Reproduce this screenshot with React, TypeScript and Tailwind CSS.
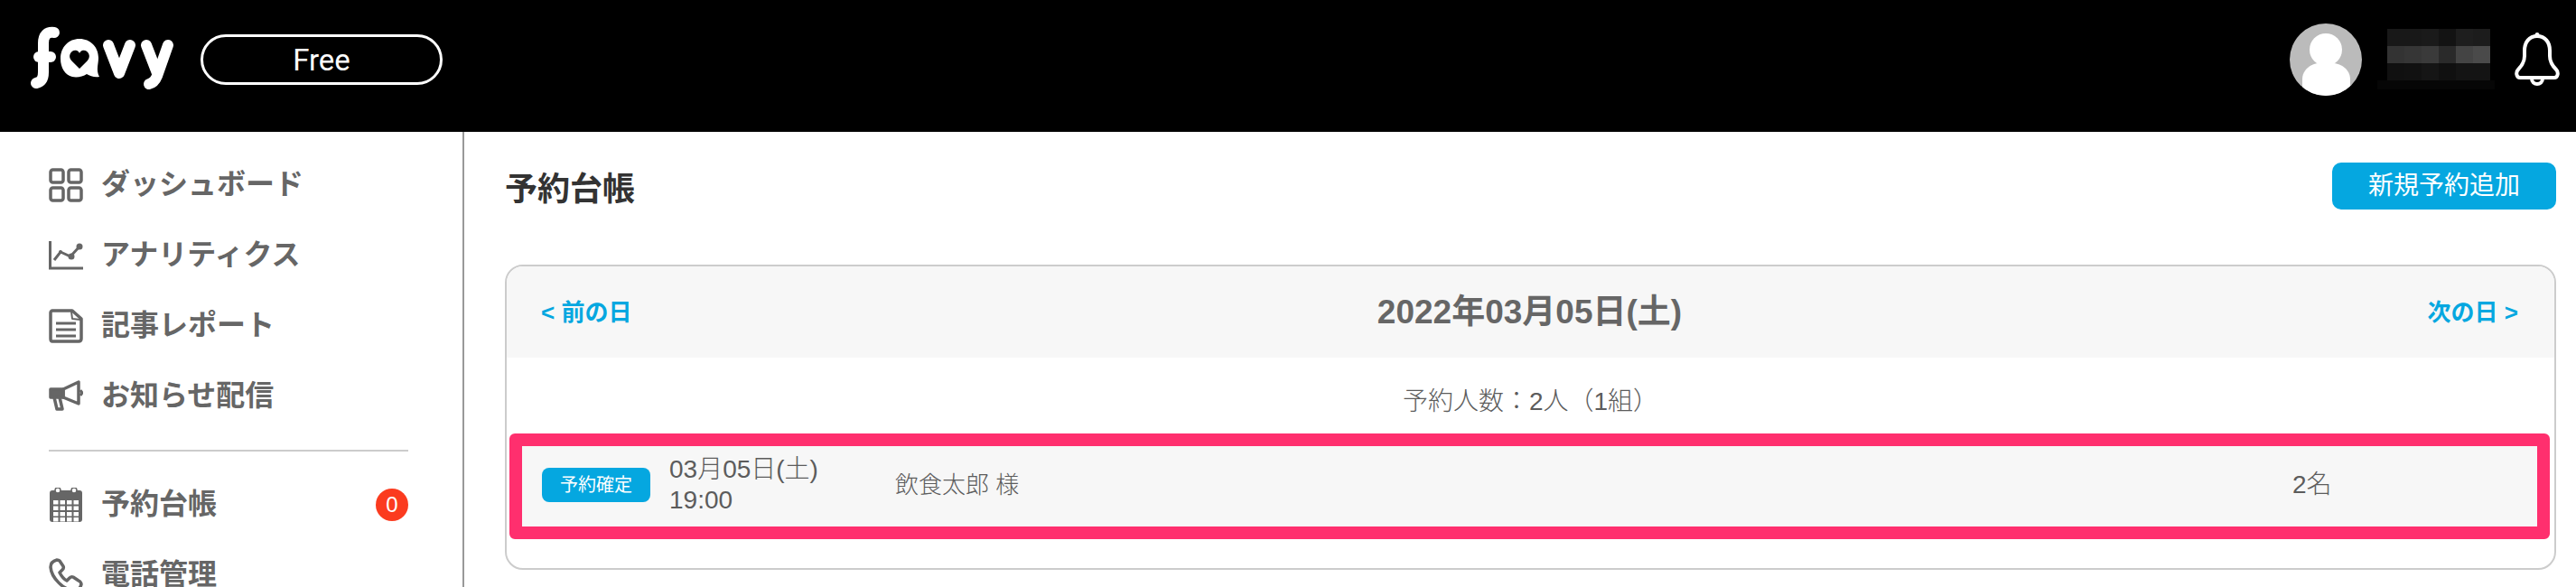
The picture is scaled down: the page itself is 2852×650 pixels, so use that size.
import React from 'react';

function FavyLogo() {
    return (
        <svg viewBox="30 28 170 80" className="w-[170px] h-[80px]" fill="none" stroke="#fff" strokeWidth="12" strokeLinecap="round" strokeLinejoin="round">
            {/* f */}
            <path d="M60 38 C52 37 48 41 48 50 L48 82 C48 90 45 93 40 94" />
            <path d="M43 65 L56 65" />
            {/* a with heart */}
            <path d="M88 45 C100 45 109 54 109 66 C109 74 106 79 110 87 C104 88 100 86 96 84 C92 87 85 88 80 87 C72 85 67 77 67 67 C67 54 76 45 88 45 Z" fill="#fff" stroke="none" />
            <path d="M88 78 L79 69 C74 63 80 56 85 58 C86.500 58.600 87.500 59.500 88 61 C88.500 59.500 89.500 58.600 91 58 C96 56 102 63 97 69 Z" fill="#000" stroke="none" />
            {/* v */}
            <path d="M120 52 L132 83 L144 52" />
            {/* y */}
            <path d="M162 52 L174 83" />
            <path d="M186 52 L174 86 C172 91 169 94 165 95" />
        </svg>
    );
}

function Avatar() {
    return (
        <svg viewBox="0 0 80 80" className="w-[80px] h-[80px] shrink-0">
            <defs>
                <clipPath id="avatarClip">
                    <circle cx="40" cy="40" r="40" />
                </clipPath>
            </defs>
            <circle cx="40" cy="40" r="40" fill="#bbbbbb" />
            <g clipPath="url(#avatarClip)" fill="#fff">
                <circle cx="40" cy="29" r="18" />
                <path d="M14 80 L14 62 C14 51 24 44 33 44 L47 44 C57 44 67 51 67 62 L67 80 Z" />
            </g>
        </svg>
    );
}

const pixelCells = [
    'bg-[#181818]', 'bg-[#181818]', 'bg-[#1a1a1a]', 'bg-[#131313]', 'bg-[#1e1e1e]', 'bg-[#1c1c1c]',
    'bg-[#333333]', 'bg-[#363636]', 'bg-[#3a3a3a]', 'bg-[#2a2a2a]', 'bg-[#444444]', 'bg-[#4a4a4a]',
    'bg-[#101010]', 'bg-[#111111]', 'bg-[#151515]', 'bg-[#101010]', 'bg-[#141414]', 'bg-[#141414]',
];

function PixelatedName() {
    return (
        <div className="relative w-[114px] h-[57px] grid grid-cols-6 grid-rows-3 ml-[28px] -mt-[11px]">
            {pixelCells.map((c, i) => (
                <div key={i} className={c} />
            ))}
            <div className="absolute left-[-11px] right-[-5px] top-[57px] h-[10px] bg-[#060606]" />
        </div>
    );
}

function Bell() {
    return (
        <svg viewBox="0 0 50 60" className="w-[50px] h-[60px] ml-[27px] shrink-0" fill="none" stroke="#fff" strokeWidth="4" strokeLinejoin="round">
            <circle cx="25" cy="2.500" r="2.500" fill="#fff" stroke="none" />
            <path d="M25 4 C16 4 11 11 11 20 L11 26 C11 33 8 37 4 41 C1 44 2 50 6 50 L44 50 C48 50 49 44 46 41 C42 37 39 33 39 26 L39 20 C39 11 34 4 25 4 Z" />
            <path d="M19 51 C19 59 31 59 31 51" />
        </svg>
    );
}

function DashIcon() {
    return (
        <svg viewBox="0 0 38 38" className="w-[38px] h-[38px]" fill="none" stroke="#666" strokeWidth="3.500">
            <rect x="2" y="2" width="14" height="14" rx="2.500" />
            <rect x="22" y="2" width="14" height="14" rx="2.500" />
            <rect x="2" y="22" width="14" height="14" rx="2.500" />
            <rect x="22" y="22" width="14" height="14" rx="2.500" />
        </svg>
    );
}

function ChartIcon() {
    return (
        <svg viewBox="0 0 38 38" className="w-[38px] h-[38px]" fill="none" stroke="#666" strokeWidth="3">
            <path d="M1.500 3 L1.500 33 L38 33" strokeWidth="3" />
            <path d="M6 24 L13 15 L24 20 L34 9" strokeWidth="3" />
            <circle cx="34" cy="9" r="3.500" fill="#666" stroke="none" />
            <circle cx="25" cy="20" r="3.500" fill="#666" stroke="none" />
            <circle cx="13" cy="15" r="2" fill="#666" stroke="none" />
        </svg>
    );
}

function DocIcon() {
    return (
        <svg viewBox="0 0 38 38" className="w-[38px] h-[38px]" fill="none" stroke="#666" strokeWidth="3.500" strokeLinejoin="round">
            <path d="M4 2 L26 2 L36 11 L36 33 C36 35 35 36 33 36 L4 36 C2.500 36 2 35 2 33 L2 4 C2 3 3 2 4 2 Z" />
            <path d="M25 3 L26 11 L35 12" strokeWidth="2" />
            <path d="M8 16 L30 16 M8 23 L30 23 M8 30 L30 30" strokeWidth="3" />
        </svg>
    );
}

function MegaphoneIcon() {
    return (
        <svg viewBox="0 0 38 38" className="w-[38px] h-[38px]" fill="#666" stroke="#666" strokeWidth="3.500" strokeLinejoin="round">
            <path d="M2 11 L16 11 L16 20 L2 20 Z" />
            <path d="M16 11 L33 3 L33 27 L16 20 Z" fill="none" />
            <path d="M35 12 L37 15 L35 18" strokeWidth="3" fill="none" />
            <path d="M6 20 L9 33 L15 33 L12 20" fill="none" />
        </svg>
    );
}

function CalendarIcon() {
    return (
        <svg viewBox="0 0 38 38" className="w-[38px] h-[38px]">
            <path d="M4 3 L34 3 C36 3 37 4 37 6 L37 35 C37 37 36 38 34 38 L4 38 C2 38 1 37 1 35 L1 6 C1 4 2 3 4 3 Z" fill="#666" />
            <rect x="7" y="0" width="6" height="6" rx="3" fill="#fff" stroke="#666" strokeWidth="1.500" />
            <rect x="25" y="0" width="6" height="6" rx="3" fill="#fff" stroke="#666" strokeWidth="1.500" />
            {[14, 20.500, 27, 33].map((y) =>
                [5, 12.500, 20, 27.500].map((x) => (
                    <rect key={`${x}-${y}`} x={x} y={y} width="5.500" height="4.500" fill="#fff" />
                ))
            )}
        </svg>
    );
}

function PhoneIcon() {
    return (
        <svg viewBox="0 0 38 38" className="w-[38px] h-[38px]" fill="none" stroke="#666" strokeWidth="3.500" strokeLinejoin="round">
            <path d="M9 2 C5 3 2 6 2 10 C3 22 16 35 28 36 C32 36 35 33 36 29 C36 27 35 26 33 25 L27 21 C25 20 24 21 23 22 L20 25 C16 23 14 20 12 16 L15 13 C16 12 17 11 16 9 L12 3 C11 2 10 2 9 2 Z" />
        </svg>
    );
}

function NavItem({ icon, label, badge }: { icon: React.ReactNode; label: string; badge?: string }) {
    return (
        <div className="h-[78px] flex items-center">
            <div className="w-[38px] shrink-0 flex">{icon}</div>
            <span className="ml-[20px] pb-[3px] text-[32px] leading-none font-bold text-[#666666] whitespace-nowrap">{label}</span>
            {badge && (
                <span className="ml-auto w-[36px] h-[36px] rounded-full bg-[#fb3b1f] text-white text-[24px] leading-none flex items-center justify-center">
                    {badge}
                </span>
            )}
        </div>
    );
}

export default function App() {
    return (
        <div className="w-[2852px] h-[650px] overflow-hidden flex flex-col bg-white font-['Liberation_Sans','Noto_Sans_CJK_JP',sans-serif]">
            {/* Header */}
            <header className="h-[146px] shrink-0 bg-black flex items-center pb-[14px] pr-[18px] pl-[30px]">
                <FavyLogo />
                <div className="ml-[22px] w-[268px] h-[56px] rounded-full border-[3px] border-white flex items-center justify-center text-white text-[33px] leading-none font-normal font-['Roboto',sans-serif]">
                    Free
                </div>
                <div className="ml-auto flex items-center">
                    <Avatar />
                    <PixelatedName />
                    <Bell />
                </div>
            </header>

            <div className="flex-1 flex min-h-0">
                {/* Sidebar */}
                <aside className="w-[514px] shrink-0 border-r-2 border-[#999999] pt-[20px] pl-[54px] pr-[60px]">
                    <NavItem icon={<DashIcon />} label="ダッシュボード" />
                    <NavItem icon={<ChartIcon />} label="アナリティクス" />
                    <NavItem icon={<DocIcon />} label="記事レポート" />
                    <NavItem icon={<MegaphoneIcon />} label="お知らせ配信" />
                    <div className="h-[2px] bg-[#cccccc] my-[20px]" />
                    <NavItem icon={<CalendarIcon />} label="予約台帳" badge="0" />
                    <NavItem icon={<PhoneIcon />} label="電話管理" />
                </aside>

                {/* Main */}
                <main className="flex-1 min-w-0 pt-[34px] pl-[45px] pr-[22px]">
                    <div className="flex items-center justify-between">
                        <h1 className="pt-[8px] text-[36px] leading-none font-bold text-[#333333]">予約台帳</h1>
                        <button className="w-[248px] h-[52px] rounded-[10px] bg-[#05a7e0] text-white text-[28px] leading-none flex items-center justify-center">
                            新規予約追加
                        </button>
                    </div>

                    <div className="mt-[61px] h-[338px] border-2 border-[#cccccc] rounded-[20px] overflow-hidden">
                        <div className="h-[101px] bg-[#f7f7f7] flex items-center justify-between pl-[38px] pr-[40px]">
                            <span className="text-[26px] leading-none font-bold text-[#05a7e0]">&lt; 前の日</span>
                            <span className="text-[37px] leading-none font-bold text-[#666666]">2022年03月05日(土)</span>
                            <span className="text-[26px] leading-none font-bold text-[#05a7e0]">次の日 &gt;</span>
                        </div>
                        <div className="h-[84px] pt-[14px] flex items-center justify-center text-[28px] leading-none text-[#5c5c5c] font-light">
                            予約人数：2人（1組）
                        </div>
                        <div className="h-[117px] ml-[3px] mr-[5px] border-[14px] border-[#ff2f6e] rounded-[6px] bg-[#f7f7f7] flex items-center pl-[22px] pb-[3px] text-[#5c5c5c] font-light">
                            <span className="w-[120px] h-[38px] rounded-[8px] bg-[#05a7e0] text-white text-[20px] leading-none font-normal flex items-center justify-center shrink-0">
                                予約確定
                            </span>
                            <div className="ml-[21px] w-[250px] shrink-0 text-[28px] leading-[34px]">
                                <div>03月05日(土)</div>
                                <div>19:00</div>
                            </div>
                            <div className="flex-1 text-[26px] leading-none">飲食太郎 様</div>
                            <div className="w-[271px] shrink-0 text-[28px] leading-none">2名</div>
                        </div>
                    </div>
                </main>
            </div>
        </div>
    );
}
